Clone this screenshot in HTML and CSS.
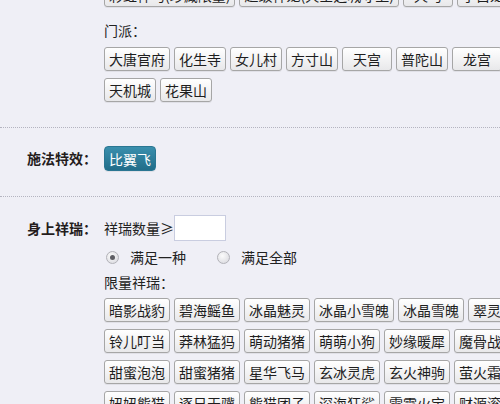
FILE: index.html
```html
<!DOCTYPE html>
<html lang="zh-CN">
<head>
    <meta charset="UTF-8">
    <meta name="viewport" content="width=device-width, initial-scale=1.0">
    <title>筛选</title>
    <link rel="stylesheet" href="styles.css">
</head>
<body>

    <div class="filter">
        <div class="section first">
            <div class="label"></div>
            <div class="body">
                <div class="row">
                    <button class="btn">彩虹神马(珍藏限量)</button>
                    <button class="btn">超级神龙(天空之城守卫)</button>
                    <button class="btn">天马</button>
                    <button class="btn">小白龙</button>
                </div>
                <div class="sub top">门派：</div>
                <div class="row">
                    <button class="btn">大唐官府</button>
                    <button class="btn">化生寺</button>
                    <button class="btn">女儿村</button>
                    <button class="btn">方寸山</button>
                    <button class="btn">天宫</button>
                    <button class="btn">普陀山</button>
                    <button class="btn">龙宫</button>
                </div>
                <div class="row">
                    <button class="btn">天机城</button>
                    <button class="btn">花果山</button>
                </div>
            </div>
        </div>

        <div class="section">
            <div class="label">施法特效：</div>
            <div class="body">
                <div class="row">
                    <button class="btn on">比翼飞</button>
                </div>
            </div>
        </div>

        <div class="section">
            <div class="label tall">身上祥瑞：</div>
            <div class="body">
                <div class="count">祥瑞数量≥<input class="num" type="text"></div>
                <div class="radios">
                    <label class="radio"><span class="dot checked"></span>满足一种</label>
                    <label class="radio"><span class="dot"></span>满足全部</label>
                </div>
                <div class="sub">限量祥瑞：</div>
                <div class="row">
                    <button class="btn">暗影战豹</button>
                    <button class="btn">碧海鳐鱼</button>
                    <button class="btn">冰晶魅灵</button>
                    <button class="btn">冰晶小雪魄</button>
                    <button class="btn">冰晶雪魄</button>
                    <button class="btn">翠灵仙鹿</button>
                </div>
                <div class="row">
                    <button class="btn">铃儿叮当</button>
                    <button class="btn">莽林猛犸</button>
                    <button class="btn">萌动猪猪</button>
                    <button class="btn">萌萌小狗</button>
                    <button class="btn">妙缘暖犀</button>
                    <button class="btn">魔骨战熊</button>
                </div>
                <div class="row">
                    <button class="btn">甜蜜泡泡</button>
                    <button class="btn">甜蜜猪猪</button>
                    <button class="btn">星华飞马</button>
                    <button class="btn">玄冰灵虎</button>
                    <button class="btn">玄火神驹</button>
                    <button class="btn">萤火霜蝶</button>
                </div>
                <div class="row">
                    <button class="btn">妞妞熊猫</button>
                    <button class="btn">逐日天骥</button>
                    <button class="btn">熊猫团子</button>
                    <button class="btn">深海狂鲨</button>
                    <button class="btn">雷霆火宝</button>
                    <button class="btn">财源滚滚</button>
                </div>
            </div>
        </div>
    </div>

</body>
</html>
```

FILE: styles.css
```css
body {
    margin: 0;
    background: #efeff6;
    font-family: "Noto Sans CJK SC", "Liberation Sans", sans-serif;
    font-size: 14px;
    color: #222;
    overflow: hidden;
}

.filter {
    width: 660px;
    margin-top: -17px;
}

.section {
    display: flex;
    padding: 18px 0 25px;
    border-bottom: 1px dotted #b4b4c0;
}
.section.first {
    padding-top: 0;
}

.label {
    width: 77px;
    padding-left: 27px;
    flex-shrink: 0;
    font-weight: bold;
    line-height: 25px;
    color: #241c1c;
}
.label.tall {
    line-height: 26px;
}

.body {
    flex: 1;
}

.row {
    display: flex;
    gap: 4px;
}
.row + .row {
    margin-top: 7px;
}

.btn {
    box-sizing: border-box;
    height: 24px;
    min-width: 50px;
    padding: 0 4px;
    border: 1px solid #a6a6a6;
    border-radius: 3px;
    background: linear-gradient(#ffffff, #e8e8ea);
    box-shadow: 0 1px 0 rgba(0, 0, 0, 0.06);
    font-family: inherit;
    font-size: 14px;
    line-height: 22px;
    color: #1e1e1e;
    white-space: nowrap;
    flex-shrink: 0;
}
.btn.on {
    height: 25px;
    padding: 0 4px;
    border: 1px solid #2a7692;
    border-radius: 4px;
    background: linear-gradient(#3a8fad, #216d89);
    color: #fff;
}

.sub {
    line-height: 24px;
    margin: 1px 0 4px;
}
.sub.top {
    margin: 11px 0 5px;
}

.count {
    display: flex;
    align-items: center;
    height: 26px;
}
.num {
    box-sizing: border-box;
    width: 52px;
    height: 26px;
    border: 1px solid #c9cde0;
    background: #fff;
    margin: 0;
    outline: none;
}

.radios {
    display: flex;
    align-items: center;
    height: 24px;
    margin-top: 4px;
}
.radio {
    display: flex;
    align-items: center;
    margin-right: 29px;
}
.dot {
    position: relative;
    box-sizing: border-box;
    width: 13px;
    height: 13px;
    margin: 0 11px 0 2px;
    border: 1px solid #b2b2b8;
    border-radius: 50%;
    background: radial-gradient(circle at 40% 35%, #fbfbfb, #d6d6dc);
}
.dot.checked::after {
    content: "";
    position: absolute;
    left: 3px;
    top: 3px;
    width: 5px;
    height: 5px;
    border-radius: 50%;
    background: #5e5e64;
}
```
